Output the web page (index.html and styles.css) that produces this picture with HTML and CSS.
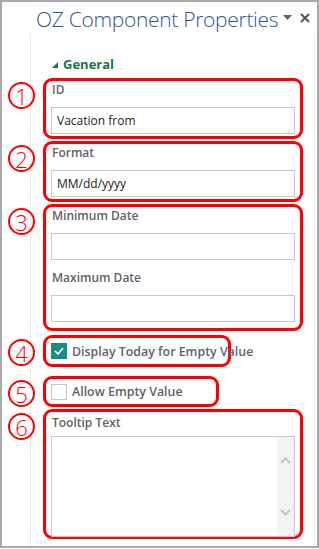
FILE: index.html
```html
<!DOCTYPE html>
<html>

<head>
  <title>OZ Component Properties</title>
  <link rel="stylesheet" href="styles.css">
</head>

<body>
  <div class="pane">
    <div class="pane-header">
      <span class="pane-title">OZ Component Properties</span>
      <svg class="pane-menu" width="9" height="5" viewBox="0 0 9 5"><polygon points="0,0 9,0 4.5,5" fill="#666"/></svg>
      <svg class="pane-close" width="10" height="10" viewBox="0 0 10 10"><path d="M1 1 L9 9 M9 1 L1 9" stroke="#555" stroke-width="2"/></svg>
    </div>

    <div class="pane-body">
      <div class="section-title">
        <svg width="6" height="6" viewBox="0 0 6 6"><polygon points="6,0 6,6 0,6" fill="#217346"/></svg>
        <span>General</span>
      </div>

      <div class="note-row first">
        <span class="note-num">1</span>
        <div class="note-box">
          <div class="field-label">ID</div>
          <div class="text-input">Vacation from</div>
        </div>
      </div>

      <div class="note-row">
        <span class="note-num">2</span>
        <div class="note-box">
          <div class="field-label">Format</div>
          <div class="text-input">MM/dd/yyyy</div>
        </div>
      </div>

      <div class="note-row">
        <span class="note-num">3</span>
        <div class="note-box tall">
          <div class="field-label">Minimum Date</div>
          <div class="text-input"></div>
          <div class="field-label next">Maximum Date</div>
          <div class="text-input"></div>
        </div>
      </div>

      <div class="note-row close">
        <span class="note-num">4</span>
        <div class="note-box check-box today">
          <span class="checkbox checked">
            <svg width="10" height="8" viewBox="0 0 10 8"><path d="M1 4 L4 7 L9 1" stroke="#fff" stroke-width="1.6" fill="none"/></svg>
          </span>
          <span class="check-label">Display Today for Empty Value</span>
        </div>
      </div>

      <div class="note-row spaced">
        <span class="note-num">5</span>
        <div class="note-box check-box allow">
          <span class="checkbox"></span>
          <span class="check-label">Allow Empty Value</span>
        </div>
      </div>

      <div class="note-row">
        <span class="note-num">6</span>
        <div class="note-box tooltip">
          <div class="field-label">Tooltip Text</div>
          <div class="text-area">
            <div class="text-area-body"></div>
            <div class="scroll">
              <svg width="11" height="7" viewBox="0 0 11 7"><path d="M1 6 L5.5 1.5 L10 6" stroke="#c4c4c4" stroke-width="2" fill="none"/></svg>
              <svg width="11" height="7" viewBox="0 0 11 7"><path d="M1 1 L5.5 5.5 L10 1" stroke="#c4c4c4" stroke-width="2" fill="none"/></svg>
            </div>
          </div>
        </div>
      </div>
    </div>
  </div>
</body>

</html>
```

FILE: styles.css
```css
* {
  box-sizing: border-box;
}

body {
  margin: 0;
  font-family: "Open Sans", "Noto Sans", sans-serif;
  background-color: #fff;
}

.pane {
  width: 319px;
  height: 548px;
  border: 2px solid #a9a9a9;
  display: flex;
  flex-direction: column;
  background-color: #fff;
}

.pane-header {
  height: 31px;
  display: flex;
  align-items: flex-start;
  padding: 4px 7px 0 34px;
}

.pane-title {
  flex: none;
  font-size: 21px;
  font-weight: 300;
  letter-spacing: -0.3px;
  line-height: 27px;
  color: #2b579a;
  white-space: nowrap;
}

.pane-menu {
  flex: none;
  margin-left: auto;
  margin-top: 9px;
}

.pane-close {
  flex: none;
  margin-left: 8px;
  margin-top: 7px;
}

.pane-body {
  flex: 1;
  padding: 22px 0 0 6px;
  background: linear-gradient(to right,
      transparent 28px, #ececec 28px, #ececec 29px, transparent 29px,
      transparent 312px, #ececec 312px, #ececec 313px, transparent 313px);
}

.section-title {
  display: flex;
  align-items: center;
  gap: 5px;
  padding-left: 44px;
  height: 18px;
  font-size: 13px;
  font-weight: bold;
  color: #217346;
}

.section-title svg {
  margin-top: 1px;
}

.note-row {
  display: flex;
  align-items: flex-start;
  gap: 8px;
  margin-top: 2px;
}

.note-row.first {
  margin-top: 5px;
}

.note-row.close {
  margin-top: 4px;
}

.note-row.spaced {
  margin-top: 9px;
}

.note-num {
  flex: none;
  width: 27px;
  height: 27px;
  margin-top: 4px;
  border: 2px solid #f00;
  border-radius: 50%;
  display: flex;
  align-items: center;
  justify-content: center;
  font-size: 22px;
  font-weight: 300;
  line-height: 1;
  color: #f00;
}

.note-box {
  width: 260px;
  border: 3px solid #f00;
  border-radius: 9px;
  padding: 0 5px 2px;
}

.note-box.tall {
  padding-bottom: 6px;
}

.field-label {
  padding-left: 1px;
  line-height: 18px;
  margin-bottom: 8px;
  font-size: 12px;
  font-weight: 600;
  color: #5f6269;
}

.field-label.next {
  margin-top: 9px;
}

.text-input {
  height: 27px;
  border: 1px solid #c8c8c8;
  padding: 0 5px;
  font-size: 12px;
  line-height: 25px;
  color: #222;
}

.check-box {
  display: flex;
  align-items: center;
  gap: 5px;
  height: 32px;
  padding: 0 5px;
}

.check-box.today {
  width: 188px;
}

.check-box.allow {
  width: 176px;
  height: 31px;
}

.checkbox {
  flex: none;
  width: 16px;
  height: 16px;
  border: 1px solid #c6c6c6;
  background-color: #fff;
  display: flex;
  align-items: center;
  justify-content: center;
}

.checkbox.checked {
  border-color: #1b8c84;
  background-color: #1b8c84;
}

.check-label {
  font-size: 12.4px;
  font-weight: 600;
  color: #5f6269;
  white-space: nowrap;
}

.note-box.tooltip {
  padding: 2px 5px 0;
  height: 130px;
}

.tooltip .field-label {
  margin-bottom: 4px;
}

.text-area {
  height: 101px;
  border: 1px solid #c8c8c8;
  display: flex;
}

.text-area-body {
  flex: 1;
}

.scroll {
  width: 17px;
  background-color: #f3f3f3;
  display: flex;
  flex-direction: column;
  align-items: center;
  justify-content: space-between;
  padding: 20px 0 20px;
}
```
